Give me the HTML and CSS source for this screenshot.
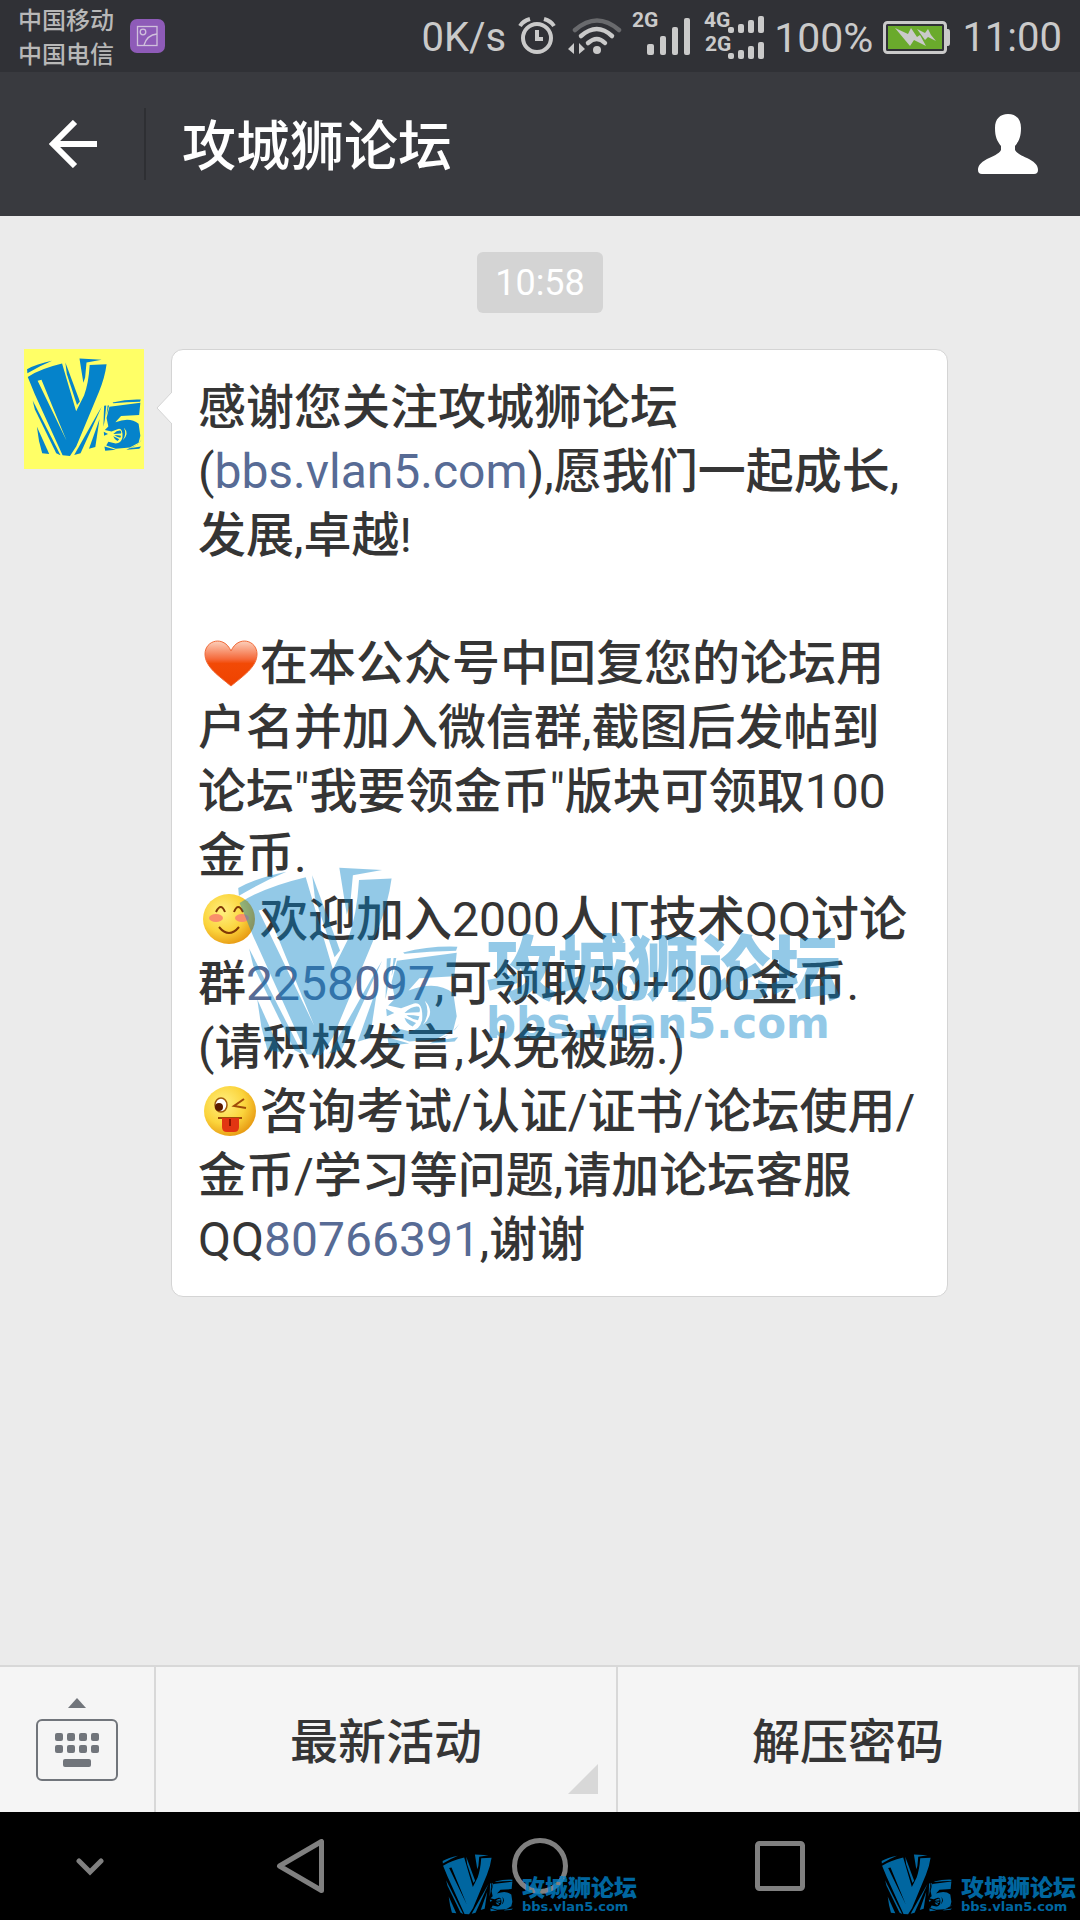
FILE: index.html
```html
<!DOCTYPE html>
<html lang="zh-CN">
<head>
    <meta charset="UTF-8">
    <meta name="viewport" content="width=device-width, initial-scale=1.0">
    <title>攻城狮论坛</title>
    <link rel="stylesheet" href="styles.css">
</head>
<body>
    <!-- shared V5 logo -->
    <svg class="defs" aria-hidden="true">
        <symbol id="v5" viewBox="0 0 665 560">
            <path d="M6 62Q60 32 148 14Q80 42 8 85Z"/>
            <path fill-rule="evenodd" d="M10 106Q80 60 205 30L285 302L330 212Q356 140 362 38L458 34Q448 110 415 190L286 500L250 555L208 552L50 204ZM66 128L230 468L88 122Z"/>
            <path d="M224 24L306 246L290 266L232 90Z"/>
            <path d="M304 2L430 9L344 24L336 110L326 140Z"/>
            <path d="M38 240L196 552L172 540L50 290Z"/>
            <path d="M62 390L132 545L92 540L74 470Z"/>
            <path d="M430 276L310 540L274 550L404 320Z"/>
            <path d="M418 346L394 504L358 515L388 430Z"/>
            <path d="M444 270L456 268L448 350L440 390Z"/>
            <path d="M464 268L472 268L458 322Z"/>
            <path d="M492 252Q570 232 652 235L648 247Q570 248 496 256Z"/>
            <path fill-rule="evenodd" d="M474 276L650 253L643 322L540 328L508 364Q590 332 640 372L650 440L640 480L590 508L510 514L456 496L468 474L510 484Q540 484 548 452Q552 396 524 402L486 416L448 408L468 388L458 340ZM556 394Q590 430 550 466Q574 430 556 394Z"/>
            <path d="M496 430Q520 408 538 412Q544 418 540 428Q520 428 496 430ZM502 436Q524 436 540 440L536 452Q516 448 502 436ZM496 444Q516 452 530 460L520 470Q502 462 496 444ZM442 418L466 430L444 440Z"/>
            <path d="M658 462Q640 494 590 512L654 502L644 514L570 520L634 490Z"/>
            <path d="M446 502L510 520L450 526Z"/>
        </symbol>
        <radialGradient id="face" cx="38%" cy="35%" r="68%">
            <stop offset="0" stop-color="#fff080"/>
            <stop offset=".6" stop-color="#fbd43c"/>
            <stop offset="1" stop-color="#e89c14"/>
        </radialGradient>
        <linearGradient id="shine" x1="0" y1="0" x2="0" y2="1">
            <stop offset="0" stop-color="#fcd0bc"/>
            <stop offset=".4" stop-color="#f5693a"/>
            <stop offset=".5" stop-color="#f24a06"/>
            <stop offset="1" stop-color="#ef4200"/>
        </linearGradient>
    </svg>

    <div class="status-bar">
        <div class="carriers">
            <div>中国移动</div>
            <div>中国电信</div>
        </div>
        <svg class="gallery-icon" width="35" height="34" viewBox="0 0 35 34">
            <rect width="35" height="34" rx="7" fill="#8e5bb8"/>
            <g fill="none" stroke="#d0c0dc" stroke-width="1.3">
                <rect x="7.500" y="7.500" width="19.500" height="19"/>
                <circle cx="13" cy="13" r="2.800"/>
                <path d="M14 26Q17 16 27 15"/>
            </g>
        </svg>
        <div class="status-right">
            <span class="status-text">0K/s</span>
            <svg width="42" height="72" viewBox="514 0 42 72">
                <circle cx="535" cy="38" r="14" fill="none" stroke="#cacaca" stroke-width="4"/>
                <path d="M535 30V39H541M518 26Q521 21 528 19M542 19Q549 21 552 26" fill="none" stroke="#cacaca" stroke-width="4"/>
            </svg>
            <svg width="54" height="72" viewBox="566 0 54 72">
                <g fill="none" stroke="#cacaca" stroke-width="4.500" stroke-linecap="round">
                    <path d="M573 30Q595 11 617 30" stroke="#696a6d"/>
                    <path d="M579 36Q595 22 610 36"/>
                    <path d="M586 43Q595 35 603 43"/>
                </g>
                <circle cx="595" cy="50" r="4" fill="#cacaca"/>
                <path d="M566 49L572 43V54ZM583 49L577 43V54Z" fill="#cacaca"/>
            </svg>
            <svg width="60" height="72" viewBox="630 0 60 72" fill="#cacaca">
                <text class="net" x="630" y="27">2G</text>
                <rect x="645" y="44" width="7" height="11" rx="2"/>
                <rect x="658" y="36" width="6" height="19" rx="2"/>
                <rect x="670" y="27" width="6" height="28" rx="2"/>
                <rect x="682" y="18" width="6" height="37" rx="2"/>
            </svg>
            <svg width="62" height="72" viewBox="700 0 62 72" fill="#cacaca">
                <text class="net" x="702" y="27">4G</text>
                <text class="net" x="703" y="51">2G</text>
                <rect x="726" y="27" width="6" height="6" rx="2"/>
                <rect x="736" y="24" width="6" height="9" rx="2"/>
                <rect x="746" y="20" width="6" height="13" rx="2"/>
                <rect x="756" y="16" width="6" height="17" rx="2"/>
                <rect x="726" y="53" width="6" height="6" rx="2"/>
                <rect x="736" y="50" width="6" height="9" rx="2"/>
                <rect x="746" y="46" width="6" height="13" rx="2"/>
                <rect x="756" y="42" width="6" height="17" rx="2"/>
            </svg>
            <span class="status-text battery-text">100%</span>
            <svg width="69" height="72" viewBox="884 0 69 72">
                <rect x="885.500" y="22.500" width="61" height="30" rx="3" fill="none" stroke="#cacaca" stroke-width="3"/>
                <rect x="889" y="26" width="54" height="23" fill="#6aaa2c"/>
                <path d="M948 29H949Q951 29 951 32V43Q951 46 949 46H948Z" fill="#cacaca"/>
                <path d="M896 28L909 34L912 28L918 37L921 35L927 46L915 40L911 46Z" fill="#cacaca"/>
                <path d="M918 29L926 33L929 29L932 35L937 41L929 37L926 40Z" fill="#cacaca"/>
            </svg>
            <span class="status-text">11:00</span>
        </div>
    </div>

    <header class="title-bar">
        <button class="back" aria-label="返回">
            <svg width="48" height="48" viewBox="0 0 48 48" fill="none" stroke="#fff" stroke-width="6">
                <path d="M26 2L4 24L26 46M4 24H48"/>
            </svg>
        </button>
        <h1>攻城狮论坛</h1>
        <button class="profile" aria-label="公众号资料">
            <svg width="62" height="60" viewBox="0 0 62 60" fill="#fff">
                <path d="M31 0C39 0 44 5 44 14C44 23 42 27 38 32V36C40 40 46 42 52 45C59 49 61 52 61 56Q61 60 57 60H5Q1 60 1 56C1 52 3 49 10 45C16 42 22 40 24 36V32C20 27 18 23 18 14C18 5 23 0 31 0Z"/>
            </svg>
        </button>
    </header>

    <main class="chat">
        <time class="time">10:58</time>
        <div class="message">
            <div class="avatar">
                <svg width="117" height="99"><use href="#v5"/></svg>
            </div>
            <div class="bubble">
                <svg class="arrow" width="16" height="34" viewBox="0 0 16 34">
                    <path d="M16 1L1 17L16 33" fill="#fff" stroke="#d4d4d4"/>
                </svg>
                <p>感谢您关注攻城狮论坛(<a href="#">bbs.vlan5.com</a>),愿我们一起成长,发展,卓越!</p>
                <br>
                <p>
                    <svg class="emoji" viewBox="0 0 62 54">
                        <path d="M33 50C21 40 7 31 7 18C7 4 26 -1 33 15C40 -1 59 4 59 18C59 31 45 40 33 50Z" fill="url(#shine)" stroke="#f16a38"/>
                    </svg>在本公众号中回复您的论坛用户名并加入微信群,截图后发帖到论坛"我要领金币"版块可领取100金币.</p>
                <p>
                    <svg class="emoji" viewBox="0 0 62 54">
                        <ellipse cx="31" cy="27" rx="26" ry="25" fill="url(#face)"/>
                        <ellipse cx="18" cy="26" rx="7" ry="4" fill="#f98f6a"/>
                        <ellipse cx="44" cy="26" rx="7" ry="4" fill="#f98f6a"/>
                        <path d="M18 20Q23 10 27 20M36 20Q40 10 45 20M21 35Q31 47 41 35" fill="none" stroke="#803806" stroke-width="2"/>
                    </svg>欢迎加入2000人IT技术QQ讨论群<a href="#">2258097</a>,可领取50+200金币.</p>
                <p>(请积极发言,以免被踢.)</p>
                <p>
                    <svg class="emoji" viewBox="0 0 62 54">
                        <ellipse cx="32" cy="27" rx="26" ry="25" fill="url(#face)"/>
                        <ellipse cx="23" cy="21" rx="6" ry="7" fill="#fff" stroke="#a05a0c" stroke-width="1.500"/>
                        <circle cx="21" cy="23" r="4" fill="#5a1a00"/>
                        <path d="M46 15L36 22L48 24M20 34H44" fill="none" stroke="#a04c08" stroke-width="2"/>
                        <path d="M24 34H41V43Q41 48 36 48H29Q24 48 24 43Z" fill="#e23512"/>
                        <path d="M32 35V42" stroke="#8c1400" stroke-width="2"/>
                    </svg>咨询考试/认证/证书/论坛使用/金币/学习等问题,请加论坛客服QQ<a href="#">80766391</a>,谢谢</p>
                <div class="watermark large">
                    <svg width="226" height="190"><use href="#v5"/></svg>
                    <div class="watermark-text">
                        <span class="name">攻城狮论坛</span>
                        <span class="url">bbs.vlan5.com</span>
                    </div>
                </div>
            </div>
        </div>
    </main>

    <footer class="menu">
        <button class="keyboard" aria-label="切换键盘">
            <svg width="82" height="84" viewBox="0 0 82 84" fill="#71757b">
                <path d="M41 0L50 10H32Z"/>
                <rect x="1" y="22" width="80" height="60" rx="5" fill="none" stroke="#71757b" stroke-width="2"/>
                <rect x="19" y="35" width="8" height="8" rx="2"/>
                <rect x="31" y="35" width="8" height="8" rx="2"/>
                <rect x="43" y="35" width="8" height="8" rx="2"/>
                <rect x="55" y="35" width="8" height="8" rx="2"/>
                <rect x="19" y="47" width="8" height="8" rx="2"/>
                <rect x="31" y="47" width="8" height="8" rx="2"/>
                <rect x="43" y="47" width="8" height="8" rx="2"/>
                <rect x="55" y="47" width="8" height="8" rx="2"/>
                <rect x="27" y="61" width="28" height="8" rx="2"/>
            </svg>
        </button>
        <button class="menu-item has-sub">最新活动</button>
        <button class="menu-item">解压密码</button>
    </footer>

    <nav class="nav-bar">
        <button aria-label="隐藏导航栏">
            <svg width="28" height="54" viewBox="0 0 28 54" fill="none" stroke="#808080" stroke-width="5" stroke-linecap="round">
                <path d="M3 22L14 33L25 22"/>
            </svg>
        </button>
        <button aria-label="后退">
            <svg width="50" height="54" viewBox="0 0 50 54" fill="none" stroke="#808080" stroke-width="5" stroke-linejoin="round">
                <path d="M46.500 2.500V51.500L4.500 27Z"/>
            </svg>
        </button>
        <button aria-label="主屏幕">
            <svg width="56" height="56" viewBox="0 0 56 56" fill="none" stroke="#808080" stroke-width="5">
                <circle cx="28" cy="28" r="25.500"/>
            </svg>
        </button>
        <button aria-label="最近任务">
            <svg width="50" height="50" viewBox="0 0 50 50" fill="none" stroke="#808080" stroke-width="5">
                <rect x="2.500" y="2.500" width="45" height="45" rx="2"/>
            </svg>
        </button>
        <div class="watermark small center">
            <svg width="72" height="61"><use href="#v5"/></svg>
            <div class="watermark-text">
                <span class="name">攻城狮论坛</span>
                <span class="url">bbs.vlan5.com</span>
            </div>
        </div>
        <div class="watermark small right">
            <svg width="72" height="61"><use href="#v5"/></svg>
            <div class="watermark-text">
                <span class="name">攻城狮论坛</span>
                <span class="url">bbs.vlan5.com</span>
            </div>
        </div>
    </nav>
</body>
</html>
```
FILE: styles.css
```css
* {
    box-sizing: border-box;
}

body {
    margin: 0;
    min-height: 100vh;
    display: flex;
    flex-direction: column;
    background-color: #ebebeb;
    color: #353535;
    font-family: Roboto, "Noto Sans CJK SC Medium", "Noto Sans CJK SC", sans-serif;
}

button {
    margin: 0;
    padding: 0;
    border: 0;
    background: none;
    color: inherit;
    font-family: inherit;
    display: flex;
    justify-content: center;
    align-items: center;
}

a {
    color: #576b95;
    text-decoration: none;
}

.defs {
    position: absolute;
    width: 0;
    height: 0;
}

/* status bar */
.status-bar {
    display: flex;
    align-items: center;
    height: 72px;
    padding: 0 18px;
    background-color: #303136;
    color: #cacaca;
}

.carriers {
    padding-top: 4px;
    font-size: 24px;
    line-height: 34px;
    color: #b8b8b8;
}

.gallery-icon {
    margin-left: 16px;
}

.status-right {
    display: flex;
    align-items: center;
    gap: 10px;
    margin-left: auto;
}

.status-text {
    padding-top: 4px;
    font-size: 40px;
    line-height: 68px;
}

.battery-text {
    font-size: 41px;
}

.net {
    font-size: 21px;
    font-weight: bold;
}

/* title bar */
.title-bar {
    display: flex;
    align-items: center;
    height: 144px;
    background-color: #393a3f;
    color: #fff;
}

.back {
    width: 146px;
    height: 72px;
    padding-left: 2px;
    border-right: 2px solid #2e2f33;
}

.title-bar h1 {
    flex: 1;
    margin: 0;
    padding: 8px 0 0 36px;
    font-size: 54px;
    font-weight: normal;
    line-height: 72px;
}

.profile {
    width: 144px;
    height: 144px;
}

/* conversation */
.chat {
    flex: 1;
    display: flex;
    flex-direction: column;
    padding: 36px 24px;
}

.time {
    align-self: center;
    padding: 2px 18px 0;
    border-radius: 6px;
    background-color: #d4d4d4;
    color: #fff;
    font-size: 36px;
    line-height: 59px;
}

.message {
    display: flex;
    align-items: flex-start;
    gap: 27px;
    margin-top: 36px;
}

.avatar {
    display: flex;
    justify-content: center;
    align-items: center;
    flex: none;
    width: 120px;
    height: 120px;
    padding-bottom: 4px;
    background-color: #ffff66;
    fill: #0583cb;
}

.bubble {
    position: relative;
    flex: 1;
    margin-right: 108px;
    padding: 26px 26px 24px;
    border: 1px solid #d4d4d4;
    border-radius: 12px;
    background-color: #fff;
    font-size: 48px;
    line-height: 64px;
}

.bubble p {
    margin: 0;
}

.arrow {
    position: absolute;
    left: -16px;
    top: 41px;
}

.emoji {
    width: 62px;
    height: 54px;
    vertical-align: -10px;
}

/* watermarks */
.watermark {
    position: absolute;
    display: flex;
    fill: #0080c8;
    color: #0080c8;
    pointer-events: none;
}

.watermark-text {
    display: flex;
    flex-direction: column;
}

.watermark .name {
    font-family: "Noto Sans CJK SC", sans-serif;
    font-weight: 900;
}

.watermark .url {
    font-family: "DejaVu Sans", sans-serif;
    font-weight: bold;
}

.large {
    left: 64px;
    top: 517px;
    gap: 24px;
    opacity: 0.42;
}

.large .watermark-text {
    padding-top: 60px;
}

.large .name {
    font-size: 71px;
    line-height: 72px;
}

.large .url {
    font-size: 42px;
    line-height: 50px;
}

.small {
    top: 42px;
    gap: 8px;
    opacity: 0.8;
}

.small .watermark-text {
    padding-top: 20px;
}

.small .name {
    font-size: 23px;
    line-height: 24px;
}

.small .url {
    font-size: 13px;
    line-height: 18px;
}

.center {
    left: 442px;
}

.right {
    right: 4px;
}

/* bottom menu */
.menu {
    display: flex;
    height: 147px;
    border-top: 2px solid #d8d8d8;
    background-color: #f5f5f5;
}

.menu button {
    border-right: 2px solid #d8d8d8;
}

.keyboard {
    width: 156px;
}

.menu .menu-item {
    position: relative;
    flex: 1;
    padding-top: 6px;
    font-size: 48px;
    line-height: 64px;
}

.has-sub::after {
    content: "";
    position: absolute;
    right: 18px;
    bottom: 18px;
    width: 30px;
    height: 30px;
    background-color: #d8d8d8;
    clip-path: polygon(100% 0, 100% 100%, 0 100%);
}

/* system navigation */
.nav-bar {
    position: relative;
    display: grid;
    grid-template-columns: 3fr 4fr 4fr 4fr 3fr;
    height: 108px;
    background-color: #000;
}
```
